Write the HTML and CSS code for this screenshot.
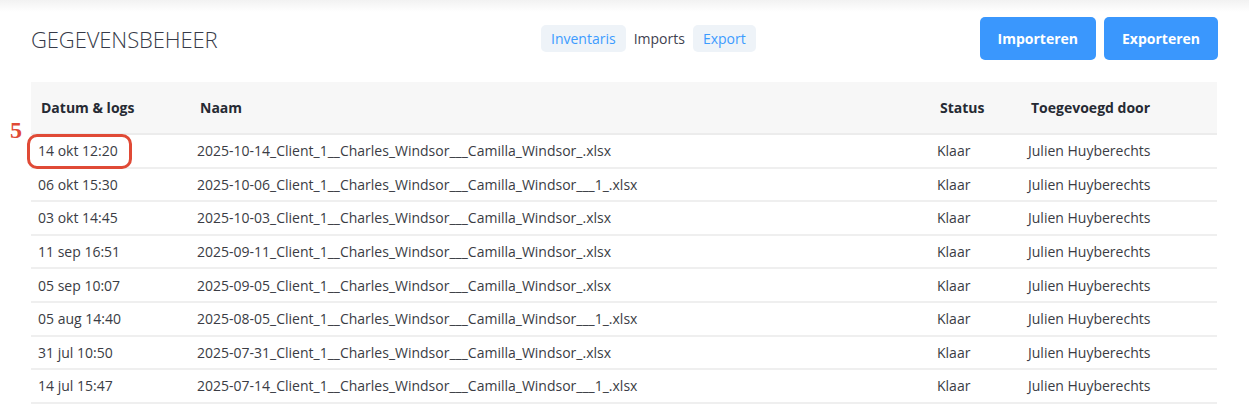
FILE: index.html
```html
<!DOCTYPE html>
<html lang="nl">
<head>
<meta charset="utf-8">
<title>Gegevensbeheer</title>
<link rel="stylesheet" href="styles.css">
</head>
<body>
<div class="topshade"></div>
<div class="page">
  <header class="bar">
    <h1 class="title">GEGEVENSBEHEER</h1>
    <nav class="tabs">
      <a class="tab tab-link">Inventaris</a>
      <span class="tab tab-current">Imports</span>
      <a class="tab tab-link">Export</a>
    </nav>
    <div class="actions">
      <button class="btn">Importeren</button>
      <button class="btn">Exporteren</button>
    </div>
  </header>

  <div class="table-wrap">
    <span class="marker-num">5</span>
    <table class="grid">
      <colgroup>
        <col class="c-date"><col class="c-name"><col class="c-status"><col class="c-by">
      </colgroup>
      <thead>
        <tr><th>Datum &amp; logs</th><th>Naam</th><th>Status</th><th>Toegevoegd door</th></tr>
      </thead>
      <tbody>
        <tr><td class="marked"><span class="marker-box"></span>14 okt 12:20</td><td>2025-10-14_Client_1__Charles_Windsor___Camilla_Windsor_.xlsx</td><td>Klaar</td><td>Julien Huyberechts</td></tr>
        <tr><td>06 okt 15:30</td><td>2025-10-06_Client_1__Charles_Windsor___Camilla_Windsor___1_.xlsx</td><td>Klaar</td><td>Julien Huyberechts</td></tr>
        <tr><td>03 okt 14:45</td><td>2025-10-03_Client_1__Charles_Windsor___Camilla_Windsor_.xlsx</td><td>Klaar</td><td>Julien Huyberechts</td></tr>
        <tr><td>11 sep 16:51</td><td>2025-09-11_Client_1__Charles_Windsor___Camilla_Windsor_.xlsx</td><td>Klaar</td><td>Julien Huyberechts</td></tr>
        <tr><td>05 sep 10:07</td><td>2025-09-05_Client_1__Charles_Windsor___Camilla_Windsor_.xlsx</td><td>Klaar</td><td>Julien Huyberechts</td></tr>
        <tr><td>05 aug 14:40</td><td>2025-08-05_Client_1__Charles_Windsor___Camilla_Windsor___1_.xlsx</td><td>Klaar</td><td>Julien Huyberechts</td></tr>
        <tr><td>31 jul 10:50</td><td>2025-07-31_Client_1__Charles_Windsor___Camilla_Windsor_.xlsx</td><td>Klaar</td><td>Julien Huyberechts</td></tr>
        <tr><td>14 jul 15:47</td><td>2025-07-14_Client_1__Charles_Windsor___Camilla_Windsor___1_.xlsx</td><td>Klaar</td><td>Julien Huyberechts</td></tr>
      </tbody>
    </table>
  </div>
</div>
</body>
</html>
```

FILE: styles.css
```css
* { box-sizing: border-box; }
html, body {
  margin: 0;
  background: #ffffff;
  font-family: "Open Sans", "Noto Sans", sans-serif;
  color: #3a3a3a;
  overflow: hidden;
}
.topshade {
  height: 12px;
  background: linear-gradient(#f2f2f2, #ffffff);
}
.page {
  padding: 0 31px 0 31px;
}
.bar {
  display: flex;
  align-items: center;
  height: 43px;
  margin-top: 5px;
}
.title {
  margin: 0;
  width: 510px;
  font-size: 22px;
  font-weight: 300;
  color: #363a48;
  letter-spacing: -0.1px;
}
.tabs {
  display: flex;
  align-items: center;
  gap: 8px;
  font-size: 14px;
}
.tab {
  display: inline-flex;
  align-items: center;
  height: 27px;
  padding: 0 10px;
  border-radius: 5px;
}
.tab-link {
  background: #eef3f8;
  color: #3c9bff;
  cursor: pointer;
}
.tab-current {
  padding: 0;
  color: #3f4250;
}
.actions {
  margin-left: auto;
  display: flex;
  gap: 8px;
}
.btn {
  height: 43px;
  border: none;
  border-radius: 5px;
  background: #3a97fd;
  color: #ffffff;
  font-family: "Open Sans", "Noto Sans", sans-serif;
  font-weight: 700;
  font-size: 14px;
  padding: 0 18px;
}
.table-wrap {
  position: relative;
  margin-top: 22px;
  margin-right: 1px;
}
.grid {
  width: 100%;
  border-collapse: collapse;
  font-size: 14px;
}
.c-date { width: 159px; }
.c-status { width: 91px; }
.c-by { width: 196px; }
.grid th {
  background: #f7f7f7;
  height: 52px;
  text-align: left;
  font-weight: 700;
  color: #262a33;
  padding: 0 10px;
  border-bottom: 2px solid #ececec;
}
.grid td {
  height: 33.6px;
  padding: 0 7px;
  border-bottom: 2px solid #efefef;
  color: #3a3c44;
  white-space: nowrap;
}
.marked {
  position: relative;
}
.marker-box {
  position: absolute;
  left: -4px;
  top: -1px;
  width: 105px;
  height: 35px;
  border: 3px solid #e04a36;
  border-radius: 10px;
}
.marker-num {
  position: absolute;
  left: -21px;
  top: 36px;
  font-family: "Liberation Serif", "DejaVu Serif", serif;
  font-weight: 700;
  font-size: 24px;
  color: #e04a36;
  line-height: 1;
}
```
